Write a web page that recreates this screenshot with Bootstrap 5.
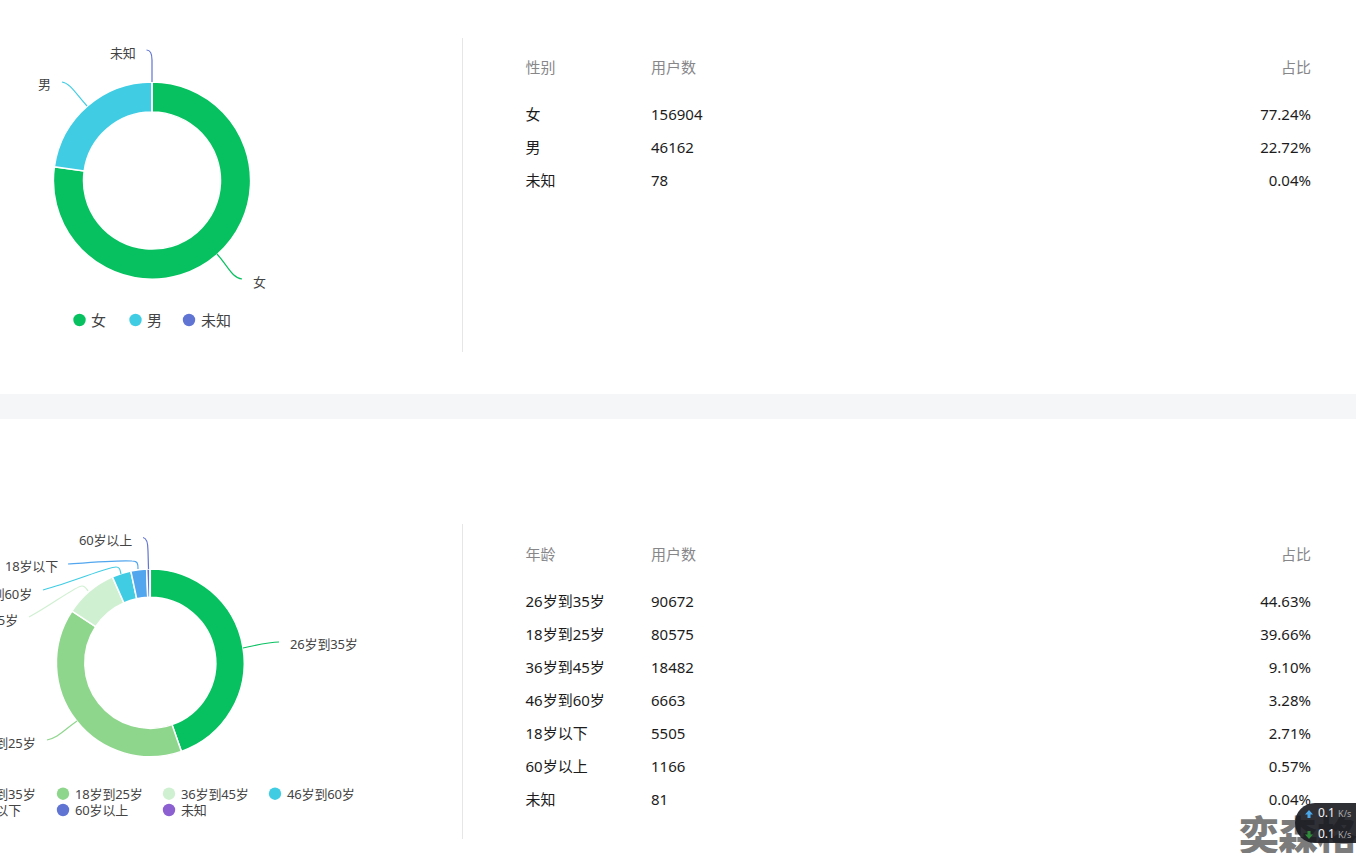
<!DOCTYPE html>
<html lang="zh">
<head>
<meta charset="utf-8">
<title>用户画像</title>
<link href="https://cdn.jsdelivr.net/npm/bootstrap@5.3.0/dist/css/bootstrap.min.css" rel="stylesheet">
<style>
html,body{height:853px;overflow:hidden;background:#fff}
body{font-family:"Noto Sans","Noto Sans CJK SC",sans-serif;font-size:15px;color:#1c1c1c;position:relative}
.sect-one{height:394px;padding:38px 0 42px}
.sect-gap{height:25px;background:#f5f6f8}
.sect-two{height:434px;padding:105px 0 14px}
.sect-two .table-pane{padding-top:14px}
.chart-pane{width:463px;flex:none;border-right:1px solid #e6e6e6;height:315px}
.sect-one .chart-pane{height:314px}
.chart-svg{display:block;overflow:hidden}
.chart-svg text{font-family:"Noto Sans","Noto Sans CJK SC",sans-serif;font-size:13px;fill:#444;letter-spacing:-.15px}
.chart-svg .lg{font-size:15px;letter-spacing:0}
.chart-svg path.seg{stroke:#fff;stroke-width:1.5}
.chart-svg path.lead{fill:none;stroke-width:1.2}
.table-pane{flex:1;padding:13px 45px 0 63px}
.stat-table{width:100%;margin:0;--bs-table-bg:transparent;color:#1c1c1c}
.stat-table th,.stat-table td{border:0;padding:0;height:33px;font-size:15px;line-height:33px;font-weight:400;box-shadow:none;background:transparent}
.stat-table th{color:#87878a;height:47px;line-height:33px;vertical-align:top}
.stat-table .c1{width:125px}
.stat-table .c1,.stat-table tbody td:first-child{position:relative;left:-.5px}
.speed-pill{position:absolute;left:1295px;top:803px;width:80px;height:40px;border-radius:20px;background:rgba(24,26,32,.9);color:#f2f2f2;font-size:12px;line-height:20px;padding-left:10px}
.speed-pill small{font-size:9px;color:#a8a8a8}
.speed-row{display:flex;align-items:center;gap:5px}
.mark-text{position:absolute;left:1239px;top:806px;font-family:"Noto Sans CJK SC",sans-serif;font-weight:900;font-size:40px;line-height:54px;color:#7b7b7b;white-space:nowrap;letter-spacing:-1px}
</style>
</head>
<body>
<section class="sect-one d-flex">
  <div class="chart-pane">
    <svg class="chart-svg" width="462" height="314" viewBox="0 38 462 314" id="c1">
      <g data-donut="152,180.600,98.600,68.500" data-vals="77.24:#07c160,22.72:#40cde4,0.04:#6074d4"></g>
      <path class="lead" stroke="#07c160" d="M217 254C228 266 232 278 242 279"/>
      <path class="lead" stroke="#40cde4" d="M87 106C76 94 70 83 62 82"/>
      <path class="lead" stroke="#6074d4" d="M152 82L152 60C152 54 150 50 146.500 50"/>
      <text x="253" y="287">女</text>
      <text x="38" y="89">男</text>
      <text x="110" y="58">未知</text>
      <circle cx="79.500" cy="320" r="6.200" fill="#07c160"/><text class="lg" x="91" y="325.500">女</text>
      <circle cx="135.500" cy="320" r="6.200" fill="#40cde4"/><text class="lg" x="147" y="325.500">男</text>
      <circle cx="189" cy="320" r="6.200" fill="#6074d4"/><text class="lg" x="201" y="325.500">未知</text>
    </svg>
  </div>
  <div class="table-pane">
    <table class="table stat-table">
      <thead><tr><th class="c1">性别</th><th>用户数</th><th class="text-end">占比</th></tr></thead>
      <tbody>
        <tr><td>女</td><td>156904</td><td class="text-end">77.24%</td></tr>
        <tr><td>男</td><td>46162</td><td class="text-end">22.72%</td></tr>
        <tr><td>未知</td><td>78</td><td class="text-end">0.04%</td></tr>
      </tbody>
    </table>
  </div>
</section>
<div class="sect-gap"></div>
<section class="sect-two d-flex">
  <div class="chart-pane">
    <svg class="chart-svg" width="462" height="315" viewBox="0 524 462 315" id="c2">
      <g data-donut="150.300,662.800,93.900,65.500" data-vals="44.63:#07c160,39.66:#8fd68d,9.10:#d0f0d2,3.28:#40cde4,2.71:#52a6ee,0.57:#6074d4,0.04:#8c60d0"></g>
      <path class="lead" stroke="#07c160" d="M243 648C258 645 268 642 279 642"/>
      <path class="lead" stroke="#8fd68d" d="M77 721C64 730 58 738 47 740"/>
      <path class="lead" stroke="#d0f0d2" d="M88 591C86 588 85 586 82 586C76 586 50 606 29 617"/>
      <path class="lead" stroke="#40cde4" d="M121 574C120 570 120 567 116 567C108 567 75 581 43 590"/>
      <path class="lead" stroke="#52a6ee" d="M138 569C138 564 138 561 132 561C120 560 95 562 68 564"/>
      <path class="lead" stroke="#6074d4" d="M148.500 569L148 551C148 544 147 538 143 537.500"/>
      <text x="290" y="649">26岁到35岁</text>
      <text x="35.500" y="748" text-anchor="end">18岁到25岁</text>
      <text x="18" y="625" text-anchor="end">36岁到45岁</text>
      <text x="32" y="599" text-anchor="end">46岁到60岁</text>
      <text x="58" y="571" text-anchor="end">18岁以下</text>
      <text x="132" y="545" text-anchor="end">60岁以上</text>
      <g>
        <text x="35.500" y="798.500" text-anchor="end">26岁到35岁</text>
        <circle cx="63" cy="793.700" r="6.200" fill="#8fd68d"/><text x="75" y="798.500">18岁到25岁</text>
        <circle cx="169" cy="793.700" r="6.200" fill="#d0f0d2"/><text x="181" y="798.500">36岁到45岁</text>
        <circle cx="275" cy="793.700" r="6.200" fill="#40cde4"/><text x="287" y="798.500">46岁到60岁</text>
        <text x="21" y="814.500" text-anchor="end">18岁以下</text>
        <circle cx="63" cy="810" r="6.200" fill="#6074d4"/><text x="75" y="814.500">60岁以上</text>
        <circle cx="169" cy="810" r="6.200" fill="#8c60d0"/><text x="181" y="814.500">未知</text>
      </g>
    </svg>
  </div>
  <div class="table-pane">
    <table class="table stat-table">
      <thead><tr><th class="c1">年龄</th><th>用户数</th><th class="text-end">占比</th></tr></thead>
      <tbody>
        <tr><td>26岁到35岁</td><td>90672</td><td class="text-end">44.63%</td></tr>
        <tr><td>18岁到25岁</td><td>80575</td><td class="text-end">39.66%</td></tr>
        <tr><td>36岁到45岁</td><td>18482</td><td class="text-end">9.10%</td></tr>
        <tr><td>46岁到60岁</td><td>6663</td><td class="text-end">3.28%</td></tr>
        <tr><td>18岁以下</td><td>5505</td><td class="text-end">2.71%</td></tr>
        <tr><td>60岁以上</td><td>1166</td><td class="text-end">0.57%</td></tr>
        <tr><td>未知</td><td>81</td><td class="text-end">0.04%</td></tr>
      </tbody>
    </table>
  </div>
</section>
<div class="mark-text">奕森格</div>
<div class="speed-pill">
  <div class="speed-row"><svg width="8" height="8" viewBox="0 0 8 8"><path d="M4 0L8 4.500H5.500V8H2.500V4.500H0Z" fill="#4aa8e8"/></svg><span>0.1 <small>K/s</small></span></div>
  <div class="speed-row"><svg width="8" height="8" viewBox="0 0 8 8"><path d="M4 8L8 3.500H5.500V0H2.500V3.500H0Z" fill="#2e8b3a"/></svg><span>0.1 <small>K/s</small></span></div>
</div>
<script>
document.querySelectorAll('[data-donut]').forEach(function(g){
  var p=g.dataset.donut.split(',').map(Number),cx=p[0],cy=p[1],R=p[2],r=p[3],a=0,NS='http://www.w3.org/2000/svg';
  g.dataset.vals.split(',').forEach(function(s){
    var v=s.split(':'),b=a+parseFloat(v[0])/100*2*Math.PI,l=(b-a)>Math.PI?1:0;
    var pt=function(ra,t){return (cx+ra*Math.sin(t)).toFixed(2)+' '+(cy-ra*Math.cos(t)).toFixed(2)};
    var e=document.createElementNS(NS,'path');
    e.setAttribute('class','seg');e.setAttribute('fill',v[1]);
    e.setAttribute('d','M'+pt(R,a)+'A'+R+' '+R+' 0 '+l+' 1 '+pt(R,b)+'L'+pt(r,b)+'A'+r+' '+r+' 0 '+l+' 0 '+pt(r,a)+'Z');
    g.appendChild(e);a=b;
  });
});
</script>
<script src="https://cdn.jsdelivr.net/npm/bootstrap@5.3.0/dist/js/bootstrap.bundle.min.js"></script>
</body>
</html>
